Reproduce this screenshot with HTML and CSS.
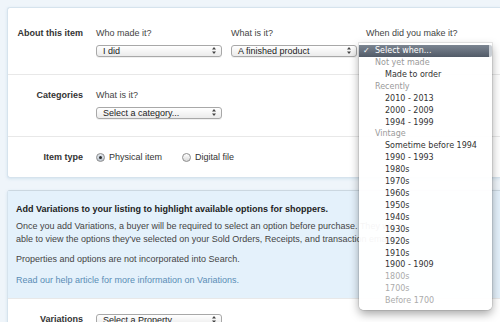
FILE: index.html
```html
<!DOCTYPE html>
<html lang="en">
<head>
    <meta charset="UTF-8">
    <title>Listing details</title>
    <link rel="stylesheet" href="styles.css">
</head>
<body>
    <div class="page">
        <div class="card">
            <div class="row row-first">
                <div class="row-label">About this item</div>
                <div class="fields">
                    <div class="field">
                        <div class="field-label">Who made it?</div>
                        <div class="select">I did<span class="arrows"><svg width="4" height="7" viewBox="0 0 4 7"><path d="M2 0 L4 2.5 L0 2.5 Z M0 4.5 L4 4.5 L2 7 Z" fill="#444"/></svg></span></div>
                    </div>
                    <div class="field">
                        <div class="field-label">What is it?</div>
                        <div class="select">A finished product<span class="arrows"><svg width="4" height="7" viewBox="0 0 4 7"><path d="M2 0 L4 2.5 L0 2.5 Z M0 4.5 L4 4.5 L2 7 Z" fill="#444"/></svg></span></div>
                    </div>
                    <div class="field">
                        <div class="field-label">When did you make it?</div>
                        <div class="select select-open">
                            <div class="popup">
                                <div class="popup-selected"><span class="check">✓</span>Select when...</div>
                                <div class="popup-group">Not yet made</div>
                                <div class="popup-item">Made to order</div>
                                <div class="popup-group">Recently</div>
                                <div class="popup-item">2010 - 2013</div>
                                <div class="popup-item">2000 - 2009</div>
                                <div class="popup-item">1994 - 1999</div>
                                <div class="popup-group">Vintage</div>
                                <div class="popup-item">Sometime before 1994</div>
                                <div class="popup-item">1990 - 1993</div>
                                <div class="popup-item">1980s</div>
                                <div class="popup-item">1970s</div>
                                <div class="popup-item">1960s</div>
                                <div class="popup-item">1950s</div>
                                <div class="popup-item">1940s</div>
                                <div class="popup-item">1930s</div>
                                <div class="popup-item">1920s</div>
                                <div class="popup-item">1910s</div>
                                <div class="popup-item">1900 - 1909</div>
                                <div class="popup-item disabled">1800s</div>
                                <div class="popup-item disabled">1700s</div>
                                <div class="popup-item disabled">Before 1700</div>
                            </div>
                        </div>
                    </div>
                </div>
            </div>

            <div class="row">
                <div class="row-label">Categories</div>
                <div class="fields">
                    <div class="field">
                        <div class="field-label">What is it?</div>
                        <div class="select">Select a category...<span class="arrows"><svg width="4" height="7" viewBox="0 0 4 7"><path d="M2 0 L4 2.5 L0 2.5 Z M0 4.5 L4 4.5 L2 7 Z" fill="#444"/></svg></span></div>
                    </div>
                </div>
            </div>

            <div class="row row-last">
                <div class="row-label">Item type</div>
                <div class="radios">
                    <label class="radio-option"><span class="radio checked"></span>Physical item</label>
                    <label class="radio-option"><span class="radio"></span>Digital file</label>
                </div>
            </div>
        </div>

        <div class="card card-variations">
            <div class="notice">
                <h3>Add Variations to your listing to highlight available options for shoppers.</h3>
                <p>Once you add Variations, a buyer will be required to select an option before purchase. They will be able to view the options they've selected on your Sold Orders, Receipts, and transaction emails.</p>
                <p>Properties and options are not incorporated into Search.</p>
                <p><a href="#">Read our help article for more information on Variations.</a></p>
            </div>
            <div class="row">
                <div class="row-label">Variations</div>
                <div class="fields">
                    <div class="field">
                        <div class="select">Select a Property<span class="arrows"><svg width="4" height="7" viewBox="0 0 4 7"><path d="M2 0 L4 2.5 L0 2.5 Z M0 4.5 L4 4.5 L2 7 Z" fill="#444"/></svg></span></div>
                    </div>
                </div>
            </div>
        </div>
    </div>
</body>
</html>
```

FILE: styles.css
```css
body {
    margin: 0;
    background: #eff5fa;
    font-family: 'Liberation Sans', Arial, sans-serif;
    font-size: 9px;
    color: #333;
    overflow: hidden;
}

.page {
    padding: 7px 0 0 7px;
}

.card {
    background: #fff;
    border: 1px solid #d6e3ed;
    border-right: none;
    border-radius: 3px 0 0 3px;
    box-shadow: 0 1px 3px rgba(160, 195, 220, 0.35);
}

.card-variations {
    margin-top: 12px;
    border-top-color: #cbd7e0;
}

.row {
    display: flex;
    padding: 15px 0 17px;
    border-top: 1px solid #e8e8e8;
    line-height: 11px;
}

.row-first {
    padding-top: 20px;
    border-top: none;
}

.row-last {
    padding-bottom: 14px;
}

.row-label {
    width: 75px;
    margin-right: 13px;
    text-align: right;
    font-weight: bold;
    color: #333;
}

.fields {
    display: flex;
    gap: 9px;
}

.field {
    width: 126px;
}

.field-label {
    color: #444;
    margin-bottom: 6px;
}

.select {
    position: relative;
    box-sizing: border-box;
    height: 12px;
    padding-left: 6px;
    border: 1px solid #a8a8a8;
    border-radius: 3px;
    background: linear-gradient(#ffffff, #ebebeb);
    box-shadow: 0 1px 0 rgba(0, 0, 0, 0.06);
    line-height: 10px;
    color: #222;
}

.arrows {
    position: absolute;
    right: 5px;
    top: 1px;
    line-height: 0;
}

.radios {
    display: flex;
    gap: 20px;
}

.radio-option {
    display: flex;
    align-items: center;
    gap: 4px;
    color: #333;
}

.radio {
    position: relative;
    box-sizing: border-box;
    width: 9px;
    height: 9px;
    border: 1px solid #8e8e8e;
    border-radius: 50%;
    background: linear-gradient(#ffffff, #d9d9d9);
}

.radio.checked {
    background: linear-gradient(#e3e9f0, #bcc5cf);
}

.radio.checked::after {
    content: '';
    position: absolute;
    left: 2px;
    top: 2px;
    width: 3px;
    height: 3px;
    border-radius: 50%;
    background: #2b2b2b;
}

.popup {
    position: absolute;
    left: -8px;
    top: -3px;
    z-index: 5;
    width: 133px;
    padding: 2px 0 3px;
    background: rgba(255, 255, 255, 0.95);
    border-radius: 0 0 5px 5px;
    box-shadow: 0 4px 10px rgba(0, 0, 0, 0.35), 0 0 0 1px rgba(0, 0, 0, 0.08);
    font-family: 'DejaVu Sans', sans-serif;
    font-size: 8px;
    line-height: 11.9px;
    color: #333;
}

.popup-selected {
    height: 12px;
    line-height: 12px;
    padding-left: 16px;
    position: relative;
    background: linear-gradient(#7b8591, #525b68);
    border-right: 3px solid #c9ced4;
    border-radius: 0 2px 2px 0;
    color: #fff;
}

.check {
    position: absolute;
    left: 4px;
}

.popup-group {
    padding-left: 16px;
    color: #9a9a9a;
}

.popup-item {
    padding-left: 26px;
}

.popup-item.disabled {
    color: #ababab;
}

.notice {
    background: #e4f1fb;
    padding: 12px 8px 11px;
    line-height: 13px;
    color: #444;
}

.notice h3 {
    margin: 0 0 4px;
    font-size: 9px;
    color: #222;
}

.notice p {
    margin: 0 0 7px;
    max-width: 392px;
}

.notice p:last-child {
    margin: 8px 0 0;
}

.notice a {
    color: #5a8db6;
    text-decoration: none;
}
```
